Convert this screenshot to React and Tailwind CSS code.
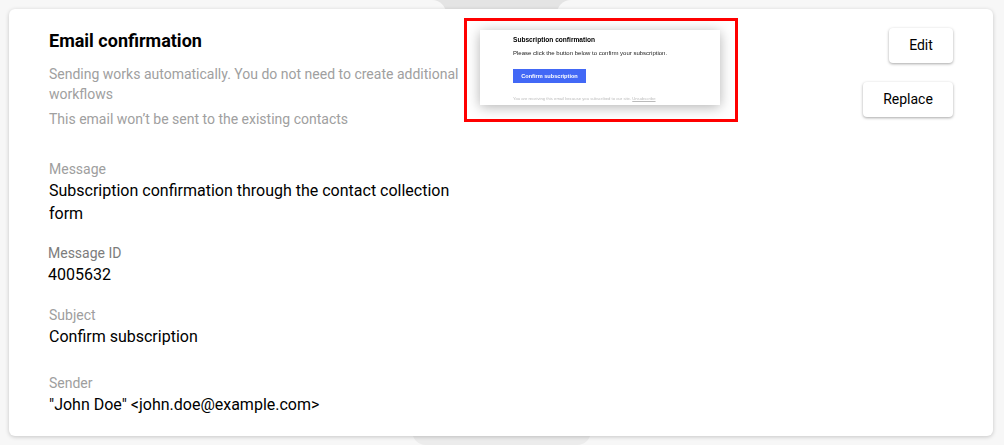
import React from "react";

const fields = [
  { label: "Message", value: "Subscription confirmation through the contact collection form", box: "mt-[30px] ml-[40px] w-[410px]", labelColor: "text-[#9e9e9e]" },
  { label: "Message ID", value: "4005632", box: "mt-[18px] ml-[39px]", labelColor: "text-[#7c7c7c]" },
  { label: "Subject", value: "Confirm subscription", box: "mt-[19px] ml-[40px]", labelColor: "text-[#9e9e9e]" },
  { label: "Sender", value: '"John Doe" <john.doe@example.com>', box: "mt-[25px] ml-[40px]", labelColor: "text-[#9e9e9e]" },
];

function Field({ label, value, box, labelColor }) {
  return (
    <div className={box}>
      <div className={`text-[14px] leading-[20px] ${labelColor}`}>{label}</div>
      <div className="text-[16px] leading-[23px] text-black">{value}</div>
    </div>
  );
}

function EmailPreview() {
  return (
    <div className="h-[104px] w-[274px] shrink-0 border-[3px] border-[#ff0000] bg-white pl-[13px] pt-[9px]">
      <div className="h-[75px] w-[240px] bg-white pl-[33px] pt-[4px] font-['Liberation_Sans',sans-serif] shadow-[0_2px_12px_rgba(0,0,0,0.3)] blur-[0.4px]">
        <div className="text-[6.6px] font-bold leading-[11px] text-black">Subscription confirmation</div>
        <div className="mt-[4px] text-[6px] leading-[9px] text-[#222222]">
          Please click the button below to confirm your subscription.
        </div>
        <div className="mt-[11px] flex h-[14px] w-[73px] items-center justify-center bg-[#4268f6] text-[5.6px] font-bold text-white">
          Confirm subscription
        </div>
        <div className="mt-[13px] whitespace-nowrap text-[4.2px] leading-[6px] text-[#bbbbbb]">
          You are receiving this email because you subscribed to our site. <span className="underline">Unsubscribe</span>
        </div>
      </div>
    </div>
  );
}

function ActionButton({ children, className }) {
  return (
    <button
      type="button"
      className={`h-[35px] rounded-[4px] bg-white text-[14px] text-black shadow-[0_1px_3px_rgba(0,0,0,0.35)] ${className}`}
    >
      {children}
    </button>
  );
}

export default function App() {
  return (
    <div className="relative h-[445px] w-[1004px] overflow-hidden bg-[#f7f7f7] p-[9px_10px_9px_9px] font-['Roboto',sans-serif]">
      {/* grey shapes peeking out behind the card */}
      <div className="absolute left-[420px] top-0 h-[12px] w-[160px] bg-[#e4e4e4]" />
      <div className="absolute left-0 top-0 h-[20px] w-[446px] rounded-tr-[14px] bg-[#f7f7f7]" />
      <div className="absolute left-[557px] top-0 h-[20px] w-[447px] rounded-tl-[14px] bg-[#f7f7f7]" />
      <div className="absolute bottom-0 left-[412px] h-[20px] w-[179px] rounded-b-[14px] bg-[#ececec]" />

      <div className="relative flex h-[427px] w-[984px] rounded-[6px] bg-white shadow-[0_1px_4px_rgba(0,0,0,0.2)]">
        <div className="w-[455px] shrink-0">
          <h1 className="ml-[40px] mt-[20px] text-[18px] font-bold leading-[24px] text-black">Email confirmation</h1>
          <p className="ml-[40px] mt-[11px] w-[415px] text-[14px] leading-[20px] text-[#a0a0a0]">
            Sending works automatically. You do not need to create additional workflows
          </p>
          <p className="ml-[40px] mt-[5px] text-[14px] leading-[20px] text-[#a0a0a0]">
            This email won’t be sent to the existing contacts
          </p>
          {fields.map((f) => (
            <Field key={f.label} {...f} />
          ))}
        </div>

        <div className="mt-[9px]">
          <EmailPreview />
        </div>

        <div className="ml-auto mr-[40px] mt-[19px] flex flex-col items-end gap-[19px]">
          <ActionButton className="w-[64px]">Edit</ActionButton>
          <ActionButton className="w-[90px]">Replace</ActionButton>
        </div>
      </div>
    </div>
  );
}
